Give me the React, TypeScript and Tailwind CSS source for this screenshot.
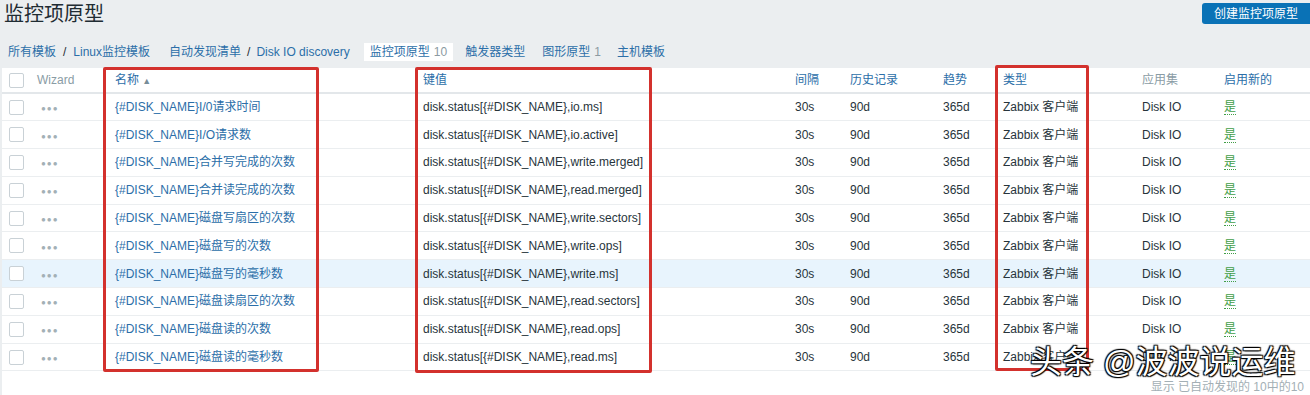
import React from "react";

interface ItemRow {
  name: string;
  key: string;
  highlight?: boolean;
}

const ROWS: ItemRow[] = [
  { name: "{#DISK_NAME}I/0请求时间", key: "disk.status[{#DISK_NAME},io.ms]" },
  { name: "{#DISK_NAME}I/O请求数", key: "disk.status[{#DISK_NAME},io.active]" },
  { name: "{#DISK_NAME}合并写完成的次数", key: "disk.status[{#DISK_NAME},write.merged]" },
  { name: "{#DISK_NAME}合并读完成的次数", key: "disk.status[{#DISK_NAME},read.merged]" },
  { name: "{#DISK_NAME}磁盘写扇区的次数", key: "disk.status[{#DISK_NAME},write.sectors]" },
  { name: "{#DISK_NAME}磁盘写的次数", key: "disk.status[{#DISK_NAME},write.ops]" },
  { name: "{#DISK_NAME}磁盘写的毫秒数", key: "disk.status[{#DISK_NAME},write.ms]", highlight: true },
  { name: "{#DISK_NAME}磁盘读扇区的次数", key: "disk.status[{#DISK_NAME},read.sectors]" },
  { name: "{#DISK_NAME}磁盘读的次数", key: "disk.status[{#DISK_NAME},read.ops]" },
  { name: "{#DISK_NAME}磁盘读的毫秒数", key: "disk.status[{#DISK_NAME},read.ms]" },
];

function Checkbox() {
  return <span className="block w-[15px] h-[15px] border border-[#c9d1d6] bg-white rounded-[2px]" />;
}

function Breadcrumbs() {
  const link = "text-[#2b6ea8]";
  return (
    <div className="flex items-center h-[20px] pl-[8px] text-[12px]">
      <span className={link}>所有模板</span>
      <span className="mx-[7px] text-[#1f2c33]">/</span>
      <span className={link}>Linux监控模板</span>
      <span className={`${link} ml-[19px]`}>自动发现清单</span>
      <span className="mx-[6px] text-[#1f2c33]">/</span>
      <span className={link}>Disk IO discovery</span>
      <span className="ml-[14px] flex items-center h-[18px] px-[6px] bg-white">
        <span className={link}>监控项原型</span>
        <span className="ml-[4px] text-[#8b9aa2]">10</span>
      </span>
      <span className={`${link} ml-[12px]`}>触发器类型</span>
      <span className={`${link} ml-[17px]`}>图形原型</span>
      <span className="ml-[4px] text-[#8b9aa2]">1</span>
      <span className={`${link} ml-[16px]`}>主机模板</span>
    </div>
  );
}

export default function App() {
  const th = "h-[25px] pl-[7px] text-left font-normal align-middle";
  const td = "h-[27.8px] pl-[7px] align-middle";
  const blue = "text-[#2b6ea8]";

  return (
    <div className="relative w-[1310px] h-[395px] overflow-hidden bg-[#ebeef0] font-['Liberation_Sans','Noto_Sans_CJK_SC',sans-serif] text-[12px] text-[#27343b]">
      <div className="flex justify-between items-start h-[42px]">
        <h1 className="pl-[4px] pt-[1px] text-[20px] leading-[26px] font-normal text-[#1f2c33]">监控项原型</h1>
        <button
          type="button"
          className="mt-[3px] h-[21px] px-[12px] bg-[#0a72b6] text-white text-[12px] rounded-l-[3px]"
        >
          创建监控项原型
        </button>
      </div>

      <Breadcrumbs />

      <div className="mt-[6px] ml-[2px] bg-white h-[400px]">
        <table className="table-fixed w-[1308px] border-collapse">
          <colgroup>
            <col className="w-[28px]" />
            <col className="w-[78px]" />
            <col className="w-[308px]" />
            <col className="w-[372px]" />
            <col className="w-[55px]" />
            <col className="w-[93px]" />
            <col className="w-[60px]" />
            <col className="w-[139px]" />
            <col className="w-[82px]" />
            <col className="w-[93px]" />
          </colgroup>
          <thead>
            <tr className="border-b-2 border-[#e3e7ea] text-[#8a9ca5]">
              <th className={th}>
                <Checkbox />
              </th>
              <th className={th}>Wizard</th>
              <th className={`${th} ${blue}`}>
                名称 <span className="text-[9px] text-[#768d99]">▲</span>
              </th>
              <th className={`${th} ${blue}`}>键值</th>
              <th className={`${th} ${blue}`}>间隔</th>
              <th className={`${th} ${blue}`}>历史记录</th>
              <th className={`${th} ${blue}`}>趋势</th>
              <th className={`${th} ${blue}`}>类型</th>
              <th className={th}>应用集</th>
              <th className={`${th} ${blue}`}>启用新的</th>
            </tr>
          </thead>
          <tbody>
            {ROWS.map((row) => (
              <tr
                key={row.key}
                className={`border-b border-[#ebeef0] ${row.highlight ? "bg-[#e8f4fd]" : ""}`}
              >
                <td className={td}>
                  <Checkbox />
                </td>
                <td className={`${td} text-[#a3b0b6]`}>
                  <span className="ml-[4px] tracking-[1px] text-[8px]">●●●</span>
                </td>
                <td className={`${td} ${blue}`}>{row.name}</td>
                <td className={td}>{row.key}</td>
                <td className={td}>30s</td>
                <td className={td}>90d</td>
                <td className={td}>365d</td>
                <td className={td}>Zabbix 客户端</td>
                <td className={td}>Disk IO</td>
                <td className={td}>
                  <span className="text-[#429e47] border-b border-dotted border-[#429e47]">是</span>
                </td>
              </tr>
            ))}
          </tbody>
        </table>
        <div className="flex justify-end pr-[6px] pt-[7px] text-[12px] text-[#a3afb5]">显示 已自动发现的 10中的10</div>
      </div>

      {/* red annotation boxes */}
      <div className="absolute left-[103px] top-[67px] w-[216px] h-[305px] border-[3px] border-[#d3312d] rounded-[2px]" />
      <div className="absolute left-[415px] top-[67px] w-[237px] h-[306px] border-[3px] border-[#d3312d] rounded-[2px]" />
      <div className="absolute left-[995px] top-[65px] w-[94px] h-[306px] border-[3px] border-[#d3312d] rounded-[2px]" />

      {/* watermark */}
      <div className="absolute left-[1030px] top-[342px] text-[32px] leading-[40px] text-white whitespace-nowrap [text-shadow:1px_1px_1px_#000,-1px_-1px_1px_#000,1px_-1px_1px_#000,-1px_1px_1px_#000]">
        头条 @波波说运维
      </div>
    </div>
  );
}
